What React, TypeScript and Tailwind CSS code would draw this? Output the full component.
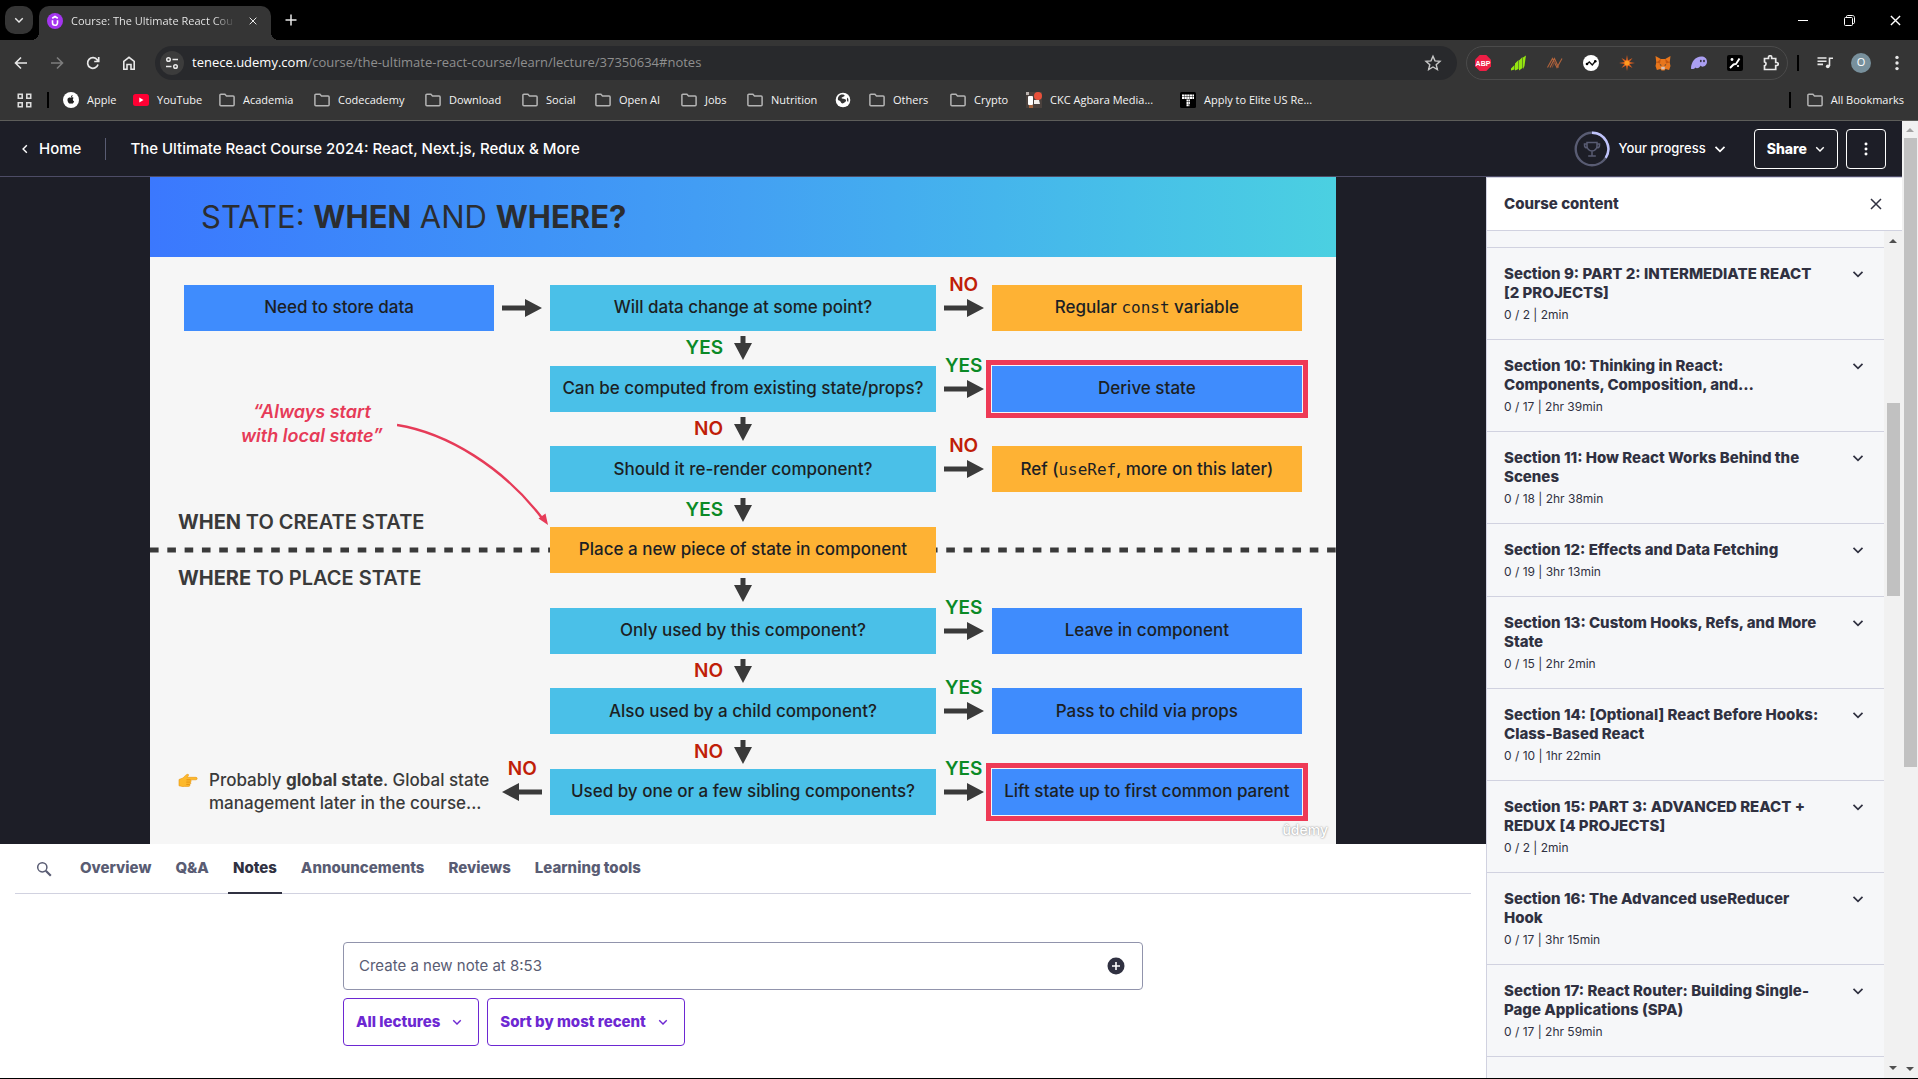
import type { ReactNode } from "react";

const ink = "#3a3a3a";

/* ---------- shared icons ---------- */

function Chevron({ className = "" }: { className?: string }) {
  return (
    <svg viewBox="0 0 12 12" className={className} fill="none" stroke="currentColor" strokeWidth="1.7" aria-hidden="true">
      <path d="M1.5 3.8 6 8.3l4.5-4.5" />
    </svg>
  );
}

function Cross({ className = "" }: { className?: string }) {
  return (
    <svg viewBox="0 0 12 12" className={className} fill="none" stroke="currentColor" strokeWidth="1.5" aria-hidden="true">
      <path d="m1 1 10 10M11 1 1 11" />
    </svg>
  );
}

function Folder() {
  return (
    <svg viewBox="0 0 16 14" className="h-3.5 w-4 shrink-0" fill="none" stroke="#b4b4b4" strokeWidth="1.5" aria-hidden="true">
      <path d="M.9 11.7V2.2c0-.6.4-1 1-1h4l1.6 1.7h6.6c.6 0 1 .4 1 1v7.8c0 .6-.4 1-1 1H1.9c-.6 0-1-.4-1-1Z" />
    </svg>
  );
}

function VerticalDots({ className = "" }: { className?: string }) {
  return (
    <svg viewBox="0 0 4 16" className={className} fill="currentColor" aria-hidden="true">
      <circle cx="2" cy="2.4" r="1.7" />
      <circle cx="2" cy="8" r="1.7" />
      <circle cx="2" cy="13.6" r="1.7" />
    </svg>
  );
}

/* ---------- browser chrome ---------- */

function TabStrip() {
  return (
    <div className="flex h-10 items-end bg-black pl-[5px] text-[#e8e8e8]">
      <button aria-label="Search tabs" className="mb-1.5 grid size-7 place-items-center rounded-[10px] bg-[#353535]">
        <Chevron className="size-2.5" />
      </button>
      <div className="relative ml-1.5 flex h-[34px] w-[232px] items-center rounded-t-[10px] bg-[#353535] pr-2.5 pb-1 pl-2">
        <span className="absolute bottom-0 -left-2 size-2 bg-[radial-gradient(circle_at_0_0,#000_8px,#353535_8px)]" />
        <span className="absolute -right-2 bottom-0 size-2 bg-[radial-gradient(circle_at_100%_0,#000_8px,#353535_8px)]" />
        <svg viewBox="0 0 16 16" className="size-4 shrink-0" aria-hidden="true">
          <circle cx="8" cy="8" r="8" fill="#a435f0" />
          <path d="M5.500 7.200v2.600a2.500 2.500 0 0 0 5 0V7.200M5.200 5.200 8 3.500l2.800 1.700" fill="none" stroke="#fff" strokeWidth="1.6" />
        </svg>
        <span className="ml-2 bg-linear-to-r from-[#f0f0f0] from-88% to-[#4a4a4a] bg-clip-text text-[11px] whitespace-nowrap text-transparent">
          Course: The Ultimate React Cou
        </span>
        <button aria-label="Close tab" className="ml-auto grid size-4 place-items-center">
          <Cross className="size-2" />
        </button>
      </div>
      <button aria-label="New tab" className="mb-1.5 ml-1.5 grid size-7 place-items-center">
        <svg viewBox="0 0 12 12" className="size-3" stroke="currentColor" strokeWidth="1.5" aria-hidden="true">
          <path d="M6 .5v11M.5 6h11" />
        </svg>
      </button>
      <div className="ml-auto flex h-10 text-white">
        <button aria-label="Minimize" className="grid w-[46px] place-items-center">
          <span className="h-px w-2.5 bg-white" />
        </button>
        <button aria-label="Restore" className="grid w-[46px] place-items-center">
          <svg viewBox="0 0 11 11" className="size-[11px]" fill="none" stroke="currentColor" aria-hidden="true">
            <rect x=".5" y="2.5" width="8" height="8" rx="1" />
            <path d="M2.5 2.5v-1c0-.6.4-1 1-1h5c1.100 0 2 .9 2 2v5c0 .6-.4 1-1 1h-1" />
          </svg>
        </button>
        <button aria-label="Close window" className="grid w-[46px] place-items-center">
          <Cross className="size-[11px]" />
        </button>
      </div>
    </div>
  );
}

const extensions: { name: string; icon: ReactNode }[] = [
  {
    name: "Adblock Plus",
    icon: (
      <>
        <path d="M4.700 0h6.600L16 4.700v6.600L11.300 16H4.700L0 11.300V4.700Z" fill="#ed1e45" />
        <text x="8" y="10.700" textAnchor="middle" fontSize="7" fontWeight="700" fill="#fff" fontFamily="Liberation Sans, sans-serif">
          ABP
        </text>
      </>
    ),
  },
  {
    name: "Chart",
    icon: (
      <path
        d="M0 13.500 3.500 10v4.500L0 15.500ZM4 8.500 7.500 5v9L4 15.500ZM8 5.500 11.500 2v11L8 15.500ZM12 2.500 15 .500l-.5 3-1 7.500-1.500 3Z"
        fill="#94e510"
      />
    ),
  },
  {
    name: "Nova",
    icon: (
      <g fill="none" stroke="#b2643c" strokeWidth="1.100">
        <path d="M.5 12.500 5.500 3.500l4.500 9 5-9M3 12.500l4.500-9 4 9" />
        <path d="M5 12.500 8 6" stroke="#7a4836" />
      </g>
    ),
  },
  {
    name: "Nansen",
    icon: (
      <>
        <circle cx="8" cy="8" r="8" fill="#fff" />
        <path d="m4 9 2.300-2 3 3 3-3.700" fill="none" stroke="#111" strokeWidth="1.400" />
        <circle cx="4" cy="9" r="1.300" />
        <circle cx="12.300" cy="6.200" r="1.300" />
      </>
    ),
  },
  {
    name: "Spark",
    icon: (
      <>
        <path d="m8 0 1 5.500L13.500 3 10.500 7l5.500 1-5.500 1 3 4L9 10.500 8 16l-1-5.500L2.500 13l3-4L0 8l5.500-1-3-4L7 5.500Z" fill="#e0601e" />
        <circle cx="8" cy="8" r="2.500" fill="#ff9a1f" />
      </>
    ),
  },
  {
    name: "MetaMask",
    icon: (
      <>
        <path d="m.5 1 5.300 3h4.400l5.300-3-.8 6.500.8 3.500-1.400 4-3.600-1L9.500 15.500h-3L5.500 14l-3.600 1L.5 11l.8-3.500Z" fill="#e8761c" />
        <path d="m1.300 7.500 4.500-3.500L5 8.500ZM14.700 7.500 10.200 4l.8 4.500Z" fill="#c4560f" />
        <path d="m4.500 9 2 1-.5 1ZM11.500 9l-2 1 .5 1Z" fill="#233447" />
        <path d="m6 13 .5-1.200h3L10 13l-.7 1.500H6.700Z" fill="#d6c0b3" />
      </>
    ),
  },
  {
    name: "Phantom",
    icon: (
      <>
        <path d="M0 13.500C0 7 4.500 1.500 10.300 1.500c3.400 0 5.700 2 5.700 5 0 3.200-2.300 5.200-4.500 5.200-1 0-1.500-.5-1.700-1.200-1 1.500-2.300 2.700-3.800 2.700-.8 0-1.300-.3-1.500-.8-1 1-2 1.600-3 1.600C.6 14 0 14 0 13.500Z" fill="#ab9ff2" />
        <ellipse cx="9.800" cy="6" rx=".9" ry="1.300" fill="#35323f" />
        <ellipse cx="13" cy="6" rx=".9" ry="1.300" fill="#35323f" />
      </>
    ),
  },
  {
    name: "Percent",
    icon: (
      <>
        <rect width="16" height="16" rx="2" />
        <path d="M3 13 6.500 9.500l2.500-.5 3.500-5.500" fill="none" stroke="#fff" strokeWidth="1.900" />
        <circle cx="5" cy="4.500" r="1.400" fill="#fff" />
        <circle cx="11" cy="11" r="1.100" fill="#fff" />
      </>
    ),
  },
  {
    name: "Extensions",
    icon: (
      <path
        d="M1.500 3.500h4V2.300a1.600 1.600 0 0 1 3.200 0v1.200h4v4h1a1.500 1.500 0 0 1 0 3h-1v4H1.500v-3.700a2 2 0 0 0 0-3.900Z"
        fill="none"
        stroke="#e8e8e8"
        strokeWidth="1.700"
      />
    ),
  },
];

function Toolbar() {
  const nav = "grid size-7 place-items-center";
  return (
    <div className="flex h-[41px] items-center bg-[#353535] pt-1 pr-[7px] pl-[7px] text-[#e8e8e8]">
      <div className="flex gap-2">
        <button aria-label="Back" className={nav}>
          <svg viewBox="0 0 14 14" className="size-3.5" fill="none" stroke="currentColor" strokeWidth="1.600" aria-hidden="true">
            <path d="M13 7H2M7 1.500 1.500 7 7 12.500" />
          </svg>
        </button>
        <button aria-label="Forward" className={`${nav} text-[#7d7d7d]`}>
          <svg viewBox="0 0 14 14" className="size-3.5" fill="none" stroke="currentColor" strokeWidth="1.600" aria-hidden="true">
            <path d="M1 7h11M7 1.500 12.500 7 7 12.500" />
          </svg>
        </button>
        <button aria-label="Reload" className={nav}>
          <svg viewBox="0 0 14 14" className="size-3.5" fill="none" stroke="currentColor" strokeWidth="1.700" aria-hidden="true">
            <path d="M12 8.500A5.300 5.300 0 1 1 11.300 4L12.500 5.200M12.700 1v4.500H8.200" />
          </svg>
        </button>
        <button aria-label="Home" className={nav}>
          <svg viewBox="0 0 14 14" className="size-3.5" fill="none" stroke="currentColor" strokeWidth="1.600" aria-hidden="true">
            <path d="M1.800 13.200V5.500L7 1.300l5.200 4.200v7.700H9V8.500H5v4.700Z" />
          </svg>
        </button>
      </div>
      <div className="ml-3 flex h-[34px] flex-1 items-center rounded-full bg-[#28292c] pr-[15px] pl-[5px]">
        <button aria-label="View site information" className="grid size-6 place-items-center rounded-full bg-[#3c3c3c]">
          <svg viewBox="0 0 14 14" className="size-3.5" fill="none" stroke="currentColor" strokeWidth="1.500" aria-hidden="true">
            <circle cx="3.500" cy="3.500" r="1.800" />
            <circle cx="10.500" cy="10.500" r="1.800" />
            <path d="M7.500 3.500h5.500M1 10.500h5.500" />
          </svg>
        </button>
        <div className="ml-2 flex flex-1 items-center text-[13px] text-[#8f8f8f]">
          <span className="text-white">tenece.udemy.com</span>
          <span>/course/the-ultimate-react-course/learn/lecture/37350634#notes</span>
          <input aria-label="Address and search bar" className="min-w-0 flex-1 bg-transparent outline-none" />
        </div>
        <button aria-label="Bookmark this tab">
          <svg viewBox="0 0 18 18" className="size-[18px]" fill="none" stroke="#c8c8c8" strokeWidth="1.400" aria-hidden="true">
            <path d="m9 2.300 2 4.600 5 .5-3.800 3.300 1.200 4.900L9 13l-4.400 2.600 1.200-4.900L2 7.400l5-.5Z" />
          </svg>
        </button>
      </div>
      <div className="ml-[9px] flex h-[34px] items-center gap-5 rounded-full border border-[#4b4b4b] px-2">
        {extensions.map((ext) => (
          <button key={ext.name} aria-label={ext.name}>
            <svg viewBox="0 0 16 16" className="size-4" aria-hidden="true">
              {ext.icon}
            </svg>
          </button>
        ))}
      </div>
      <span className="ml-[9px] h-4 w-0.5 bg-black" />
      <button aria-label="Media controls" className="ml-[18px]">
        <svg viewBox="0 0 16 14" className="h-3.5 w-4" fill="none" stroke="currentColor" strokeWidth="1.600" aria-hidden="true">
          <path d="M.5 2h9M.5 5.200h9M.5 8.400h5.500M12.500 10V2.300H16" />
          <circle cx="10.800" cy="10.300" r="1.900" fill="currentColor" stroke="none" />
        </svg>
      </button>
      <button aria-label="Profile" className="ml-[18px] grid size-5 place-items-center rounded-full bg-[#78909c] text-[11px] text-white">
        O
      </button>
      <button aria-label="Chrome menu" className="ml-3 grid size-7 place-items-center">
        <VerticalDots className="h-4 w-1" />
      </button>
    </div>
  );
}

const bookmarks: { label: string; width: string; icon?: ReactNode }[] = [
  {
    label: "Apple",
    width: "w-[70px]",
    icon: (
      <svg viewBox="0 0 16 16" className="size-4 shrink-0" aria-hidden="true">
        <circle cx="8" cy="8" r="8" fill="#fff" />
        <path d="M8 5.800c.7-.5 1.500-.7 2.600.1-1.200 1-1 2.700.5 3.300-.5 1.700-1.500 3-2.700 2.400-.3-.1-.5-.1-.8 0C5.800 12.300 4 9 4.600 7c.5-1.600 2.200-1.900 3.400-1.200ZM8 5.200c0-1.300.7-2 1.600-2.200 0 1.200-.5 2-1.600 2.200Z" fill="#222" />
      </svg>
    ),
  },
  {
    label: "YouTube",
    width: "w-[86px]",
    icon: (
      <svg viewBox="0 0 16 12" className="h-3 w-4 shrink-0" aria-hidden="true">
        <rect width="16" height="12" rx="2.500" fill="#f03" />
        <path d="m6.300 3.500 4.200 2.500-4.200 2.500Z" fill="#fff" />
      </svg>
    ),
  },
  { label: "Academia", width: "w-[95px]" },
  { label: "Codecademy", width: "w-[111px]" },
  { label: "Download", width: "w-[97px]" },
  { label: "Social", width: "w-[73px]" },
  { label: "Open AI", width: "w-[86px]" },
  { label: "Jobs", width: "w-[66px]" },
  { label: "Nutrition", width: "w-[88px]" },
  {
    label: "",
    width: "w-[34px]",
    icon: (
      <svg viewBox="0 0 16 16" className="size-4 shrink-0" aria-hidden="true">
        <circle cx="8" cy="8" r="7.300" fill="#fff" />
        <path d="M7 2.500c2 0 3 .5 2.500 1.500S6.500 5 6.500 6s4 .5 4.500 2-2 3-3.500 3.500C5.500 11 6 9 4 8.500S3 5 4 4s1.500-1.500 3-1.500ZM12.500 5.500c1 1 1.200 3 .6 4.500-1-.5-1.800-3-.6-4.500Z" fill="#353535" />
      </svg>
    ),
  },
  { label: "Others", width: "w-[81px]" },
  { label: "Crypto", width: "w-[76px]" },
  {
    label: "CKC Agbara Media...",
    width: "w-[154px]",
    icon: (
      <svg viewBox="0 0 16 16" className="size-4 shrink-0" aria-hidden="true">
        <rect width="16" height="16" fill="#4a413d" />
        <rect x="2" y="4" width="5" height="9" rx="1" fill="#fff" />
        <path d="M8 8h5l1 4H8Z" fill="#f3efec" />
        <circle cx="12" cy="4" r="4" fill="#e8503a" />
        <rect x="3" y="13" width="4" height="3" fill="#a5653f" />
        <rect width="3" height="3" fill="#b9b2ae" />
      </svg>
    ),
  },
  {
    label: "Apply to Elite US Re...",
    width: "w-[140px]",
    icon: (
      <svg viewBox="0 0 16 16" className="size-4 shrink-0" aria-hidden="true">
        <rect width="16" height="16" rx="1.500" />
        <path d="M2 3.500h12M2 6h12M6.500 8.500h3.500M6.500 11h3.500M6.500 13.300h3" stroke="#fff" strokeWidth="2" strokeDasharray="2.200 .4" />
      </svg>
    ),
  },
];

function BookmarksBar() {
  return (
    <nav className="flex h-10 items-center border-b border-[#5d5d5a] bg-[#353535] pr-3.5 pb-px pl-[17px] text-[11px] text-[#f4f4f4]">
      <button aria-label="Apps">
        <svg viewBox="0 0 15 15" className="size-[15px]" fill="none" stroke="#dcdcdc" strokeWidth="1.600" aria-hidden="true">
          <path d="M1.300 1.300h3.900v3.900H1.300ZM9.800 1.300h3.900v3.900H9.800ZM1.300 9.800h3.900v3.900H1.300ZM9.800 9.800h3.900v3.900H9.800Z" />
        </svg>
      </button>
      <span className="ml-[15px] h-4 w-0.5 bg-black" />
      <div className="ml-3.5 flex">
        {bookmarks.map((b, i) => (
          <a key={i} href="#" aria-label={b.label || "Website"} className={`flex items-center gap-2 whitespace-nowrap ${b.width}`}>
            {b.icon ?? <Folder />}
            {b.label}
          </a>
        ))}
      </div>
      <span className="ml-auto h-4 w-0.5 bg-black" />
      <a href="#" className="ml-4 flex items-center gap-2">
        <Folder />
        All Bookmarks
      </a>
    </nav>
  );
}

/* ---------- course page ---------- */

function CourseHeader() {
  return (
    <header className="flex h-14 items-center border-b border-[#4d4c66] bg-[#1d1e27] pt-px pr-4 pl-5 text-[15px] font-medium text-white">
      <a href="#" className="flex items-center gap-[9px]">
        <Chevron className="size-2.5 rotate-90" />
        Home
      </a>
      <span className="mx-6 h-[22px] w-px bg-[#595c73]" />
      <h1>The Ultimate React Course 2024: React, Next.js, Redux &amp; More</h1>
      <button className="ml-auto flex items-center gap-2 text-[13px]">
        <svg viewBox="0 0 36 36" className="size-9" fill="none" aria-hidden="true">
          <circle cx="18" cy="18" r="16.300" stroke="#595c73" strokeWidth="2.400" />
          <path d="M18 1.700A16.300 16.300 0 0 1 31.700 26.800" stroke="#c0c4fc" strokeWidth="2.400" />
          <path
            d="M13 11.500h10v3.500a5 5 0 0 1-10 0ZM13 13h-2.500v1.200c0 1.600 1 2.600 2.700 2.600M23 13h2.500v1.200c0 1.600-1 2.600-2.700 2.600M18 20v4.500M14.200 25h7.600"
            stroke="#595c73"
            strokeWidth="1.500"
          />
        </svg>
        Your progress
        <Chevron className="size-3" />
      </button>
      <button className="ml-7 flex h-10 items-center gap-2 rounded border border-white px-3 text-sm font-extrabold">
        Share
        <Chevron className="size-2.5" />
      </button>
      <button aria-label="More options" className="ml-2 grid size-10 place-items-center rounded border border-white">
        <VerticalDots className="h-3.5 w-1" />
      </button>
    </header>
  );
}

function Arrow({ className = "" }: { className?: string }) {
  return (
    <svg viewBox="0 0 40 18" className={`h-[18px] w-10 ${className}`} fill={ink} aria-hidden="true">
      <path d="M0 6.500h23V0l17 9-17 9v-6.500H0Z" />
    </svg>
  );
}

function DownArrow() {
  return (
    <svg viewBox="0 0 18 24" className="h-6 w-[18px]" fill={ink} aria-hidden="true">
      <path d="M6.500 0h5v7H18L9 24 0 7h6.500Z" />
    </svg>
  );
}

type Answer = "YES" | "NO";

function AnswerLabel({ value }: { value: Answer }) {
  return (
    <span className={value === "YES" ? "text-[19px] leading-6 font-semibold text-[#0b8a26]" : "text-[19px] leading-6 font-semibold text-[#c01e08]"}>
      {value}
    </span>
  );
}

const orange = "bg-[#feb234]";
const blue = "bg-[#3f8cfd]";
const cyan = "bg-[#4ac0e8]";

const steps: {
  question: string;
  fill: string;
  down?: Answer;
  side?: Answer;
  result?: ReactNode;
  resultFill?: string;
  marked?: boolean;
}[] = [
  {
    question: "Will data change at some point?",
    fill: cyan,
    down: "YES",
    side: "NO",
    result: (
      <span>
        Regular <code className="font-['DejaVu_Sans_Mono',monospace] text-base">const</code> variable
      </span>
    ),
    resultFill: orange,
  },
  { question: "Can be computed from existing state/props?", fill: cyan, down: "NO", side: "YES", result: "Derive state", resultFill: blue, marked: true },
  {
    question: "Should it re-render component?",
    fill: cyan,
    down: "YES",
    side: "NO",
    result: (
      <span>
        Ref (<code className="font-['DejaVu_Sans_Mono',monospace] text-base">useRef</code>, more on this later)
      </span>
    ),
    resultFill: orange,
  },
  { question: "Place a new piece of state in component", fill: orange },
  { question: "Only used by this component?", fill: cyan, down: "NO", side: "YES", result: "Leave in component", resultFill: blue },
  { question: "Also used by a child component?", fill: cyan, down: "NO", side: "YES", result: "Pass to child via props", resultFill: blue },
  { question: "Used by one or a few sibling components?", fill: cyan, side: "YES", result: "Lift state up to first common parent", resultFill: blue, marked: true },
];

function StepRow({ step, index }: { step: (typeof steps)[number]; index: number }) {
  const box = "flex h-[46px] items-center justify-center whitespace-nowrap";
  const last = index === steps.length - 1;
  return (
    <div className="grid grid-cols-[310fr_56fr_385fr_56fr_310fr] items-center">
      {index === 0 ? <div className={`${box} ${blue}`}>Need to store data</div> : <span />}
      <div className="relative flex justify-center">
        {index === 0 && <Arrow />}
        {last && (
          <>
            <Arrow className="rotate-180" />
            <span className="absolute -top-[26px]">
              <AnswerLabel value="NO" />
            </span>
          </>
        )}
      </div>
      <div className={`${box} ${step.fill}`}>{step.question}</div>
      <div className="relative flex justify-center">
        {step.side && (
          <>
            <Arrow />
            <span className="absolute -top-[26px]">
              <AnswerLabel value={step.side} />
            </span>
          </>
        )}
      </div>
      {step.result && (
        <div className={`${box} ${step.resultFill} ${step.marked ? "outline-[5px] outline-offset-1 outline-[#ee3a56]" : ""}`}>{step.result}</div>
      )}
    </div>
  );
}

function Slide() {
  return (
    <section className="relative mx-auto w-full max-w-[1186px] bg-[#f6f6f6] text-[#1c1f24]">
      <h2 className="flex h-20 items-center bg-linear-to-r from-[#3b78fe] via-[#43a0f3] to-[#4bd0e1] pl-[51px] text-[31px] text-[#2b2d30]">
        <span>
          STATE: <b>WHEN</b> AND <b>WHERE?</b>
        </span>
      </h2>
      <svg viewBox="0 0 1186 6" className="absolute top-[370px] left-0 h-1.5 w-full" aria-hidden="true">
        <path d="M0 3h1186" stroke={ink} strokeWidth="5" strokeDasharray="8.600 8.710" />
      </svg>
      <div className="relative flex h-[587px] flex-col justify-between px-[34px] pt-7 pb-[29px] text-[17px] font-medium">
        {steps.map((step, i) => (
          <div key={step.question} className="contents">
            <StepRow step={step} index={i} />
            {i < steps.length - 1 && (
              <div className="relative flex justify-center">
                <DownArrow />
                <span className="absolute right-1/2 mr-5">{step.down && <AnswerLabel value={step.down} />}</span>
              </div>
            )}
          </div>
        ))}
      </div>
      <p className="absolute top-[223px] left-[91px] text-center text-lg leading-6 font-semibold text-[#e63b58] italic">
        “Always start
        <br />
        with local state”
      </p>
      <svg viewBox="0 0 152 104" className="absolute top-[246px] left-[247px] h-[104px] w-[152px]" aria-hidden="true">
        <path d="M0 2C50 10 106 44 145 95" fill="none" stroke="#e63b58" strokeWidth="2.400" />
        <path d="m151 102-9.500-6.500 7-5Z" fill="#e63b58" />
      </svg>
      <p className="absolute top-[333px] left-7 text-xl leading-6 font-bold text-[#3a3a3a]">
        WHEN <span className="font-semibold">TO CREATE STATE</span>
      </p>
      <p className="absolute top-[389px] left-7 text-xl leading-6 font-bold text-[#3a3a3a]">
        WHERE <span className="font-semibold">TO PLACE STATE</span>
      </p>
      <div className="absolute top-[592px] left-7 flex gap-[11px] text-[17px] leading-[23px] font-medium text-[#3a3a3a]">
        <svg viewBox="0 0 20 16" className="mt-1 h-4 w-5" aria-hidden="true">
          <path
            d="M1 6.500 5 5c1.500-2 4-4 5-3.800 1 .3.600 1.500-.9 3.100H18c1.600 0 1.600 2.500 0 2.500h-5.500c1 .9.700 2-.1 2.300.8.900.4 2-.6 2.300.5 1-.1 2-1.300 2H6.300C4.500 14 3 13 1 12.800Z"
            fill="#fdb92c"
            stroke="#e8930c"
            strokeWidth=".6"
          />
          <path d="M8.500 6.800h4M8.300 9.100h4M8.300 11.400h3.400" stroke="#d98308" strokeWidth=".7" />
        </svg>
        <p>
          Probably <b>global state</b>. Global state
          <br />
          management later in the course...
        </p>
      </div>
      <span className="absolute right-2 bottom-1 text-sm font-medium text-white [text-shadow:0_0_2px_#777]">ûdemy</span>
    </section>
  );
}

const tabs = ["Overview", "Q&A", "Notes", "Announcements", "Reviews", "Learning tools"];

function CourseTabs() {
  return (
    <nav className="mx-[15px] flex h-[50px] border-b border-[#d1d2e0] pl-3.5 text-[15px] font-extrabold text-[#595c73]">
      <button aria-label="Search course" className="mr-4 grid h-[50px] w-[30px] place-items-center">
        <svg viewBox="0 0 16 16" className="size-4" fill="none" stroke="currentColor" strokeWidth="1.500" aria-hidden="true">
          <circle cx="6.300" cy="6.300" r="4.600" />
          <path d="m9.800 9.800 5 5" strokeWidth="2.200" />
        </svg>
      </button>
      <div className="flex gap-3.5">
        {tabs.map((tab) => (
          <button
            key={tab}
            className={
              tab === "Notes"
                ? "h-[50px] border-b-2 border-[#303141] px-[5px] text-[#303141]"
                : "h-[50px] border-b-2 border-transparent px-[5px]"
            }
          >
            {tab}
          </button>
        ))}
      </div>
    </nav>
  );
}

function Notes() {
  const filter = "flex h-12 items-center gap-2 rounded border border-[#6d28d2] px-3 font-extrabold text-[#6d28d2]";
  return (
    <div className="mx-auto mt-12 w-full max-w-[800px] text-[15px]">
      <div className="flex h-12 items-center rounded border border-[#9194ac] pr-[17px] pl-[15px]">
        <input
          aria-label="New note"
          placeholder="Create a new note at 8:53"
          className="flex-1 bg-transparent pt-px outline-none placeholder:text-[#595c73]"
        />
        <button aria-label="Add note">
          <svg viewBox="0 0 18 18" className="size-[18px]" aria-hidden="true">
            <circle cx="9" cy="9" r="8.500" fill="#303141" />
            <path d="M9 5v8M5 9h8" stroke="#fff" strokeWidth="1.600" />
          </svg>
        </button>
      </div>
      <div className="mt-2 flex gap-2">
        <button className={filter}>
          All lectures
          <Chevron className="mx-1 size-2.5" />
        </button>
        <button className={filter}>
          Sort by most recent
          <Chevron className="mx-1 size-2.5" />
        </button>
      </div>
    </div>
  );
}

const sections = [
  { lines: ["Section 9: PART 2: INTERMEDIATE REACT", "[2 PROJECTS]"], meta: "0 / 2 | 2min" },
  { lines: ["Section 10: Thinking in React:", "Components, Composition, and…"], meta: "0 / 17 | 2hr 39min" },
  { lines: ["Section 11: How React Works Behind the", "Scenes"], meta: "0 / 18 | 2hr 38min" },
  { lines: ["Section 12: Effects and Data Fetching"], meta: "0 / 19 | 3hr 13min" },
  { lines: ["Section 13: Custom Hooks, Refs, and More", "State"], meta: "0 / 15 | 2hr 2min" },
  { lines: ["Section 14: [Optional] React Before Hooks:", "Class-Based React"], meta: "0 / 10 | 1hr 22min" },
  { lines: ["Section 15: PART 3: ADVANCED REACT +", "REDUX [4 PROJECTS]"], meta: "0 / 2 | 2min" },
  { lines: ["Section 16: The Advanced useReducer", "Hook"], meta: "0 / 17 | 3hr 15min" },
  { lines: ["Section 17: React Router: Building Single-", "Page Applications (SPA)"], meta: "0 / 17 | 2hr 59min" },
];

function Triangle({ className = "" }: { className?: string }) {
  return (
    <svg viewBox="0 0 8 4" className={`h-1 w-2 ${className}`} fill="currentColor" aria-hidden="true">
      <path d="M4 0 8 4H0Z" />
    </svg>
  );
}

function Sidebar() {
  return (
    <aside className="flex w-[416px] shrink-0 flex-col border-l border-[#d1d2e0] bg-[#f6f7f9] text-[#303141]">
      <div className="flex h-[54px] shrink-0 items-center justify-between border-y border-[#d1d2e0] bg-white pr-5 pl-[17px]">
        <h2 className="text-[15px] font-extrabold">Course content</h2>
        <button aria-label="Close course content">
          <Cross className="size-3" />
        </button>
      </div>
      <div className="flex min-h-0 flex-1">
        <ul className="flex-1 overflow-hidden pt-4">
          {sections.map((section) => (
            <li key={section.meta + section.lines[0]} className="border-t border-[#d1d2e0]">
              <button className="flex w-full items-start justify-between pt-4 pr-5 pb-4 pl-[17px] text-left">
                <span>
                  <span className="block text-[15px] leading-[19px] font-extrabold whitespace-nowrap">
                    {section.lines.map((line) => (
                      <span key={line} className="block">
                        {line}
                      </span>
                    ))}
                  </span>
                  <span className="mt-1 block text-xs leading-[17px]">{section.meta}</span>
                </span>
                <Chevron className="mt-1 size-3" />
              </button>
            </li>
          ))}
          <li className="h-10 border-t border-[#d1d2e0]" />
        </ul>
        <div className="flex w-[18px] flex-col items-center bg-[#f1f1f1] py-2 text-[#505050]">
          <Triangle />
          <div className="mt-[160px] h-[193px] w-[13px] bg-[#c1c1c1]" />
          <Triangle className="mt-auto rotate-180" />
        </div>
      </div>
    </aside>
  );
}

export default function App() {
  return (
    <div className="flex h-screen flex-col overflow-hidden border-b border-black bg-white">
      <div className="shrink-0 font-['Open_Sans',sans-serif]">
        <TabStrip />
        <Toolbar />
        <BookmarksBar />
      </div>
      <div className="flex min-h-0 flex-1 font-['Inter',sans-serif]">
        <div className="flex min-w-0 flex-1 flex-col">
          <CourseHeader />
          <div className="flex min-h-0 flex-1">
            <main className="min-w-0 flex-1">
              <div className="bg-[#1d1e27]">
                <Slide />
              </div>
              <CourseTabs />
              <Notes />
            </main>
            <Sidebar />
          </div>
        </div>
        <div className="flex w-4 flex-col items-center bg-[#f1f1f1] py-[7px] text-[#505050]">
          <Triangle className="text-[#a3a3a3]" />
          <div className="mt-1.5 h-[629px] w-[13px] bg-[#c1c1c1]" />
          <Triangle className="mt-auto rotate-180" />
        </div>
      </div>
    </div>
  );
}
